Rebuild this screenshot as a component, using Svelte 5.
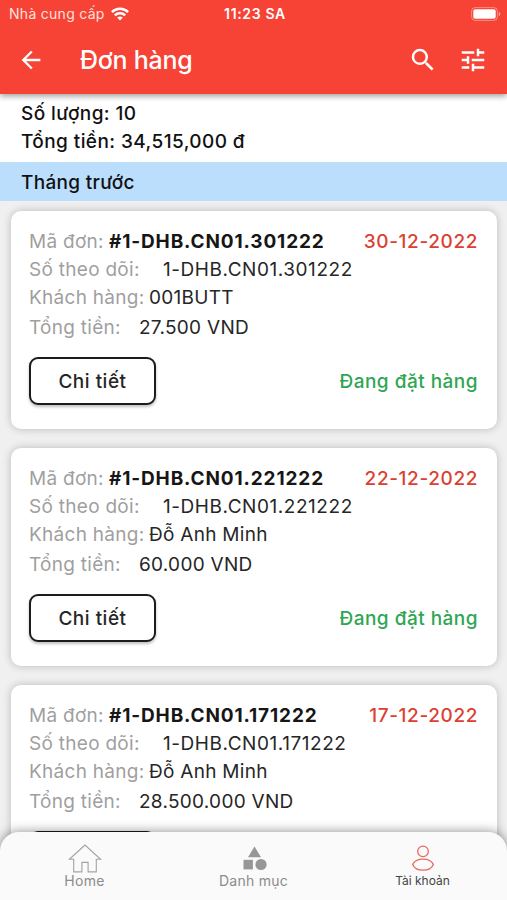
<script>
  let orders = [
    { code: "1-DHB.CN01.301222", date: "30-12-2022", customer: "001BUTT", total: "27.500 VND" },
    { code: "1-DHB.CN01.221222", date: "22-12-2022", customer: "Đỗ Anh Minh", total: "60.000 VND" },
    { code: "1-DHB.CN01.171222", date: "17-12-2022", customer: "Đỗ Anh Minh", total: "28.500.000 VND" }
  ];
</script>

<div class="screen">
  <header>
    <div class="status">
      <div class="carrier">
        <span>Nhà cung cấp</span>
        <svg width="18" height="14" viewBox="0 0 18 14" fill="none" stroke="#fff" stroke-width="2.5">
          <path d="M.9 5.2a11.5 11.5 0 0 1 16.2 0" />
          <path d="M3.8 8.4a7.4 7.4 0 0 1 10.4 0" />
          <path d="M9 13.6L6.2 10.8a4 4 0 0 1 5.6 0z" fill="#fff" stroke="none" />
        </svg>
      </div>
      <span class="time">11:23 SA</span>
      <svg class="battery" width="30" height="14" viewBox="0 0 30 14">
        <rect x=".6" y=".6" width="25.8" height="12.8" rx="3.6" fill="none" stroke="#fff" stroke-opacity=".4" />
        <rect x="2.3" y="2.3" width="22.4" height="9.4" rx="2" fill="#fff" />
        <path d="M27.8 4.6q3.2 2.4 0 4.8z" fill="#fff" fill-opacity=".5" />
      </svg>
    </div>
    <div class="appbar">
      <svg class="back" width="28" height="28" viewBox="0 0 24 24" fill="#fff">
        <path d="M20 11H7.83l5.59-5.59L12 4l-8 8 8 8 1.41-1.41L7.83 13H20v-2z" />
      </svg>
      <h1>Đơn hàng</h1>
      <svg class="search" width="30" height="30" viewBox="0 0 24 24" fill="#fff">
        <path d="M15.5 14h-.79l-.28-.27A6.47 6.47 0 0 0 16 9.5 6.5 6.5 0 1 0 9.5 16c1.61 0 3.09-.59 4.23-1.57l.27.28v.79l5 4.99L20.49 19l-4.99-5zm-6 0C7.01 14 5 11.99 5 9.5S7.01 5 9.5 5 14 7.01 14 9.5 11.99 14 9.5 14z" />
      </svg>
      <svg width="30" height="30" viewBox="0 0 24 24" fill="#fff">
        <path d="M3 17v2h6v-2H3zM3 5v2h10V5H3zm10 16v-2h8v-2h-8v-2h-2v6h2zM7 9v2H3v2h4v2h2V9H7zm14 4v-2H11v2h10zm-6-4h2V7h4V5h-4V3h-2v6z" />
      </svg>
    </div>
  </header>

  <section class="summary">
    <p>Số lượng: 10</p>
    <p>Tổng tiền: 34,515,000 đ</p>
  </section>
  <div class="month">Tháng trước</div>

  <main>
    {#each orders as order}
      <article>
        <div class="row">
          <span class="label w-code">Mã đơn:</span>
          <b>#{order.code}</b>
          <span class="date">{order.date}</span>
        </div>
        <div class="row">
          <span class="label w-track">Số theo dõi:</span>
          <span class="track">{order.code}</span>
        </div>
        <div class="row">
          <span class="label w-customer">Khách hàng:</span>
          <span>{order.customer}</span>
        </div>
        <div class="row total">
          <span class="label w-total">Tổng tiền:</span>
          <span>{order.total}</span>
        </div>
        <div class="actions">
          <button>Chi tiết</button>
          <span class="state">Đang đặt hàng</span>
        </div>
      </article>
    {/each}
  </main>

  <nav>
    <div class="tab">
      <svg width="34" height="30" viewBox="0 0 34 30" fill="none" stroke="#a3a3a3" stroke-width="1.1">
        <path d="M17 1L1.400 15.300h4.300v12.600h8.200V18.400h6.200v9.500h8.200V15.300h4.300z" />
      </svg>
      <span>Home</span>
    </div>
    <div class="tab">
      <svg width="34" height="30" viewBox="0 0 34 30" fill="#979797">
        <path d="M17.500 2.500l6.500 10.700H11z" />
        <rect x="6.500" y="15.800" width="9.400" height="9.600" />
        <circle cx="24" cy="20.500" r="5.600" />
      </svg>
      <span>Danh mục</span>
    </div>
    <div class="tab active">
      <svg width="34" height="30" viewBox="0 0 34 30" fill="none" stroke="#e8695f" stroke-width="1.3">
        <circle cx="17" cy="7.400" r="5.300" />
        <path d="M6.700 20.400C8.200 17.200 12 15.200 17 15.200s8.800 2 10.300 5.200C25.800 24 22 26.200 17 26.200S8.200 24 6.700 20.400z" />
      </svg>
      <span>Tài khoản</span>
    </div>
  </nav>
</div>

<style>
  :global(body) {
    margin: 0;
    overflow: hidden;
  }

  .screen {
    display: flex;
    flex-direction: column;
    position: relative;
    width: 507px;
    height: 900px;
    overflow: hidden;
    background: #f0f0f0;
    color: #262626;
    font-family: Inter, Roboto, sans-serif;
    font-size: 19px;
    letter-spacing: 0.28px;
  }

  header {
    flex: none;
    height: 94px;
    background: #f64336;
    color: #fff;
    z-index: 1;
    box-shadow: 0 2px 6px rgba(0, 0, 0, 0.4);
  }

  .status {
    display: grid;
    grid-template-columns: 1fr auto 1fr;
    align-items: center;
    height: 27px;
    padding: 0 6px 0 9px;
    font-size: 14px;
  }

  .carrier {
    display: flex;
    align-items: center;
    gap: 6px;
    color: #ffe0dd;
  }

  .time {
    font-weight: 600;
    letter-spacing: 0.65px;
  }

  .battery {
    justify-self: end;
  }

  .appbar {
    display: flex;
    align-items: center;
    height: 65px;
    padding: 0 19px 0 17px;
  }

  h1 {
    flex: 1;
    margin: 0 0 0 35px;
    font-size: 25px;
    font-weight: 500;
    letter-spacing: -0.25px;
  }

  .search {
    margin-right: 20px;
  }

  .summary {
    flex: none;
    box-sizing: border-box;
    height: 68px;
    padding: 6px 21px 0;
    background: #fff;
    color: #111;
    font-weight: 500;
    letter-spacing: 0.42px;
  }

  .summary p {
    margin: 0;
    line-height: 28px;
  }

  .month {
    flex: none;
    height: 39px;
    padding: 0 21px;
    line-height: 41px;
    background: #bbdefd;
    color: #111;
    font-weight: 500;
    letter-spacing: 0.32px;
  }

  main {
    display: flex;
    flex-direction: column;
    gap: 19px;
    padding: 10px 10px 0 11px;
  }

  article {
    flex: none;
    box-sizing: border-box;
    height: 218px;
    padding: 17px 19px 0 18px;
    border-radius: 10px;
    background: #fff;
    box-shadow: 0 0 9px rgba(0, 0, 0, 0.23);
  }

  .row {
    display: flex;
    height: 28px;
    line-height: 28px;
    white-space: nowrap;
  }

  .row b {
    color: #161616;
    letter-spacing: 0.87px;
  }

  .track {
    letter-spacing: 0.55px;
  }

  .total {
    margin-top: 2px;
  }

  .label {
    flex: none;
    color: #9f9f9f;
  }

  .w-code {
    width: 80px;
  }

  .w-track {
    width: 134px;
  }

  .w-customer {
    width: 120px;
  }

  .w-total {
    width: 110px;
  }

  .date {
    margin-left: auto;
    color: #dc3f32;
    font-weight: 500;
    letter-spacing: 0.6px;
  }

  .actions {
    display: flex;
    align-items: center;
    justify-content: space-between;
    margin-top: 15px;
  }

  button {
    width: 127px;
    height: 48px;
    padding: 0;
    border: 2px solid #1c1c1c;
    border-radius: 9px;
    background: #fff;
    color: #262626;
    box-shadow: 0 2px 3px rgba(0, 0, 0, 0.25);
    font: 500 19px Inter, Roboto, sans-serif;
    letter-spacing: 0.5px;
  }

  .state {
    color: #2ea653;
    font-weight: 500;
    letter-spacing: 0.48px;
  }

  nav {
    display: grid;
    grid-template-columns: repeat(3, 1fr);
    position: absolute;
    left: 0;
    right: 0;
    bottom: 0;
    height: 68px;
    border-radius: 19px 19px 0 0;
    background: #fafafa;
    box-shadow: 0 0 12px rgba(0, 0, 0, 0.45);
    z-index: 1;
  }

  .tab {
    display: flex;
    flex-direction: column;
    align-items: center;
    padding-top: 12px;
    color: #8c8c8c;
    font-size: 14px;
    line-height: 13px;
  }

  .active {
    color: #444;
    font-size: 12px;
    letter-spacing: 0;
  }
</style>
